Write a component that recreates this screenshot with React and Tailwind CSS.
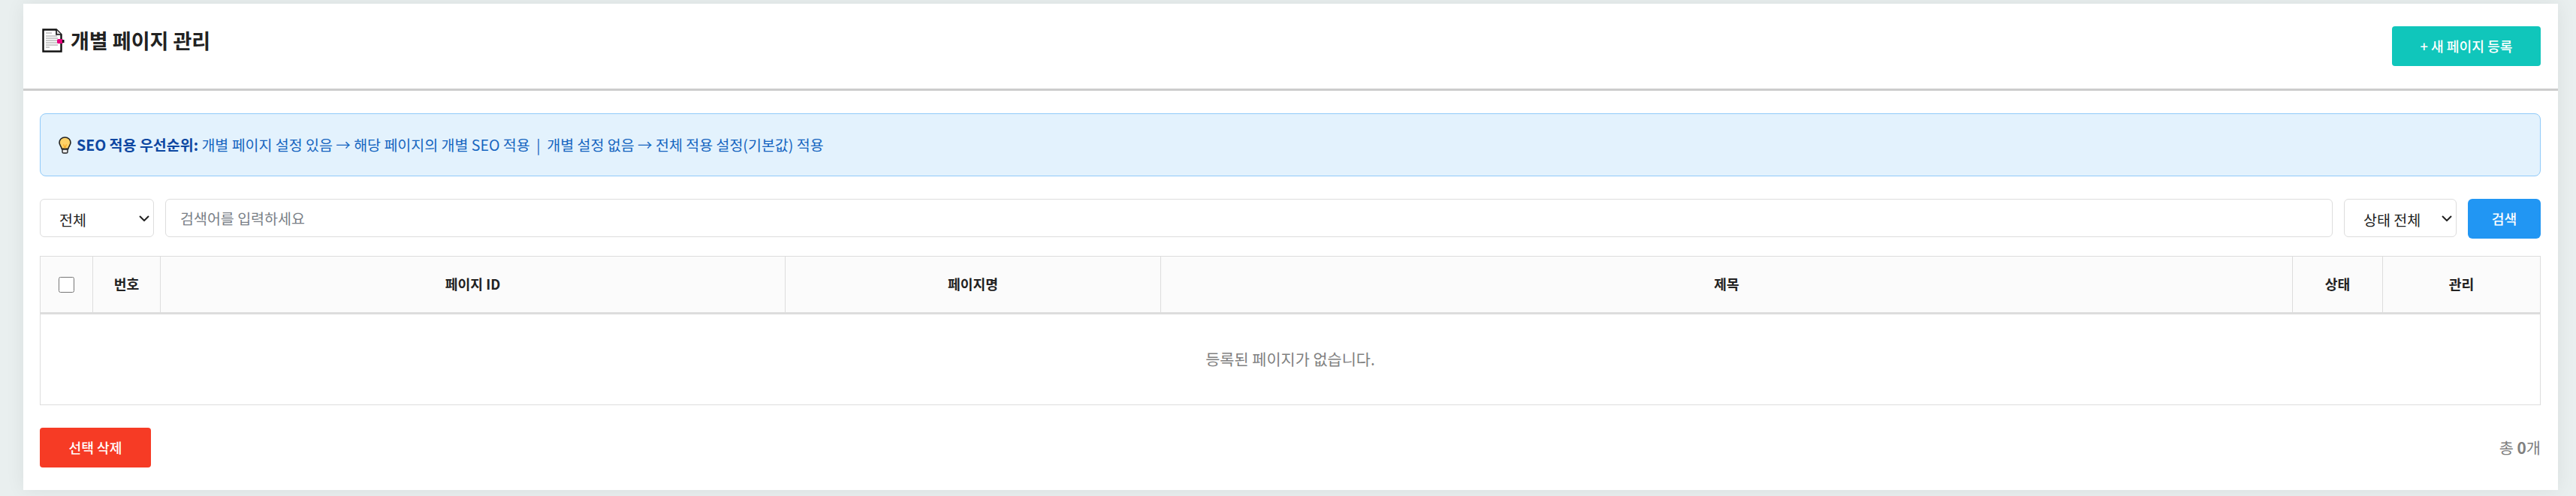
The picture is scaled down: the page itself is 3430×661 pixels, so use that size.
const fontStack = { fontFamily: '"Noto Sans CJK KR", "Noto Sans", sans-serif' };

function PageIcon() {
  return (
    <svg width="30" height="32" viewBox="0 0 30 32" className="shrink-0">
      <path d="M1.5 1.5H19L25.5 8V30.5H1.5Z" fill="#fff" stroke="#111" strokeWidth="2.4" />
      <path d="M19 1.5V8H25.5" fill="#ddd" stroke="#111" strokeWidth="1.6" />
      <g stroke="#aaa" strokeWidth="1.2">
        <path d="M5 6H13" />
        <path d="M5 10H20" />
        <path d="M5 13H21" />
        <path d="M5 16H20" />
        <path d="M5 19H20" />
        <path d="M5 22H21" />
        <path d="M5 25H10" />
      </g>
      <rect x="20" y="14" width="8" height="6" rx="1.5" fill="#e6007e" />
      <rect x="27" y="15" width="2.5" height="4" fill="#111" />
    </svg>
  );
}

function BulbIcon() {
  return (
    <svg width="17" height="23" viewBox="0 0 17 23" className="shrink-0">
      <path
        d="M8.5 1C4.2 1 1 4.1 1 8c0 3.300 2.600 4.900 3.200 8.400h8.600C13.400 12.900 16 11.300 16 8c0-3.900-3.200-7-7.500-7Z"
        fill="#ffd266"
        stroke="#222"
        strokeWidth="1.6"
      />
      <path d="M6.500 10.500 8.500 15l2-4.500" fill="none" stroke="#f5a623" strokeWidth="1.2" />
      <path d="M5 17h7v3.400c0 .9-1 1.600-1.800 1.600H6.800C6 22 5 21.300 5 20.400Z" fill="#eee" stroke="#222" strokeWidth="1.4" />
    </svg>
  );
}

function Select({ label, width }) {
  return (
    <div className={`relative shrink-0 ${width}`}>
      <select className="h-[51px] w-full appearance-none rounded-[6px] border border-[#dddddd] bg-white pl-[25px] pt-[5px] text-[19.5px] text-[#222222]">
        <option>{label}</option>
      </select>
      <svg width="14" height="8" viewBox="0 0 14 8" className="pointer-events-none absolute right-[6px] top-[22px]">
        <path d="M1 1l6 6 6-6" fill="none" stroke="#222" strokeWidth="2" />
      </svg>
    </div>
  );
}

const columns = [
  { label: "번호", width: "w-[90px]" },
  { label: "페이지 ID", width: "w-[832px]" },
  { label: "페이지명", width: "w-[500px]" },
  { label: "제목", width: "w-[1507px]" },
  { label: "상태", width: "w-[120px]" },
  { label: "관리", width: "" },
];

export default function App() {
  return (
    <div style={fontStack} className="min-h-[661px] bg-[#e9efef] pl-[31px] pr-[24px] pt-[5px] pb-[9px]">
      <div className="bg-white shadow-[0_0_24px_rgba(0,0,0,0.07)]">
        <header className="flex items-start justify-between border-b-[3px] border-[#cccccc] pl-[22px] pr-[23px] pt-[30px] pb-[30px]">
          <h1 className="flex items-center gap-[8px] pl-[3px] text-[27px] font-bold leading-[38px] text-[#222222]">
            <PageIcon />
            개별 페이지 관리
          </h1>
          <button className="flex h-[53px] w-[198px] items-center justify-center rounded-[4px] bg-[#10c6bb] text-[18.2px] font-medium text-white">
            + 새 페이지 등록
          </button>
        </header>

        <main className="pl-[22px] pr-[23px] pt-[30px] pb-[30px]">
          <div className="flex h-[84px] items-center gap-[7px] rounded-[8px] border border-[#90caf9] bg-[#e3f2fd] pl-[24px] text-[19.5px] text-[#1565c0]">
            <BulbIcon />
            <p>
              <strong className="font-bold text-[#0d47a1]">SEO 적용 우선순위:</strong> 개별 페이지 설정 있음 → 해당 페이지의 개별 SEO 적용 &nbsp;|&nbsp; 개별 설정 없음 → 전체 적용 설정(기본값) 적용
            </p>
          </div>

          <div className="mt-[30px] flex items-start gap-[15px]">
            <Select label="전체" width="w-[152px]" />
            <input
              placeholder="검색어를 입력하세요"
              className="h-[51px] min-w-0 flex-1 rounded-[6px] border border-[#dddddd] px-[19px] text-[19.5px] placeholder:text-[#7a7f87]"
            />
            <Select label="상태 전체" width="w-[150px]" />
            <button className="h-[53px] w-[97px] shrink-0 rounded-[6px] bg-[#2196f3] text-[18.2px] font-medium text-white">
              검색
            </button>
          </div>

          <table className="mt-[23px] w-full table-fixed border-separate border-spacing-0 border border-[#dddddd] text-[18.2px]">
            <thead>
              <tr className="bg-[#fbfbfb]">
                <th className="h-[77px] w-[70px] border-r border-b-[3px] border-[#dddddd] p-0">
                  <input type="checkbox" className="mx-auto block h-[21px] w-[21px]" />
                </th>
                {columns.map((col, i) => (
                  <th
                    key={col.label}
                    className={`${col.width} h-[77px] border-b-[3px] border-[#dddddd] p-0 font-bold text-[#222222] ${i < columns.length - 1 ? "border-r" : ""}`}
                  >
                    {col.label}
                  </th>
                ))}
              </tr>
            </thead>
            <tbody>
              <tr>
                <td colSpan={7} className="h-[120px] text-center text-[20.8px] text-[#808080]">
                  등록된 페이지가 없습니다.
                </td>
              </tr>
            </tbody>
          </table>

          <div className="mt-[30px] flex items-center justify-between">
            <button className="h-[53px] w-[148px] rounded-[4px] bg-[#f63b25] text-[18.2px] font-medium text-white">
              선택 삭제
            </button>
            <p className="text-[20.8px] text-[#808080]">
              총 <strong className="font-bold">0</strong>개
            </p>
          </div>
        </main>
      </div>
    </div>
  );
}
